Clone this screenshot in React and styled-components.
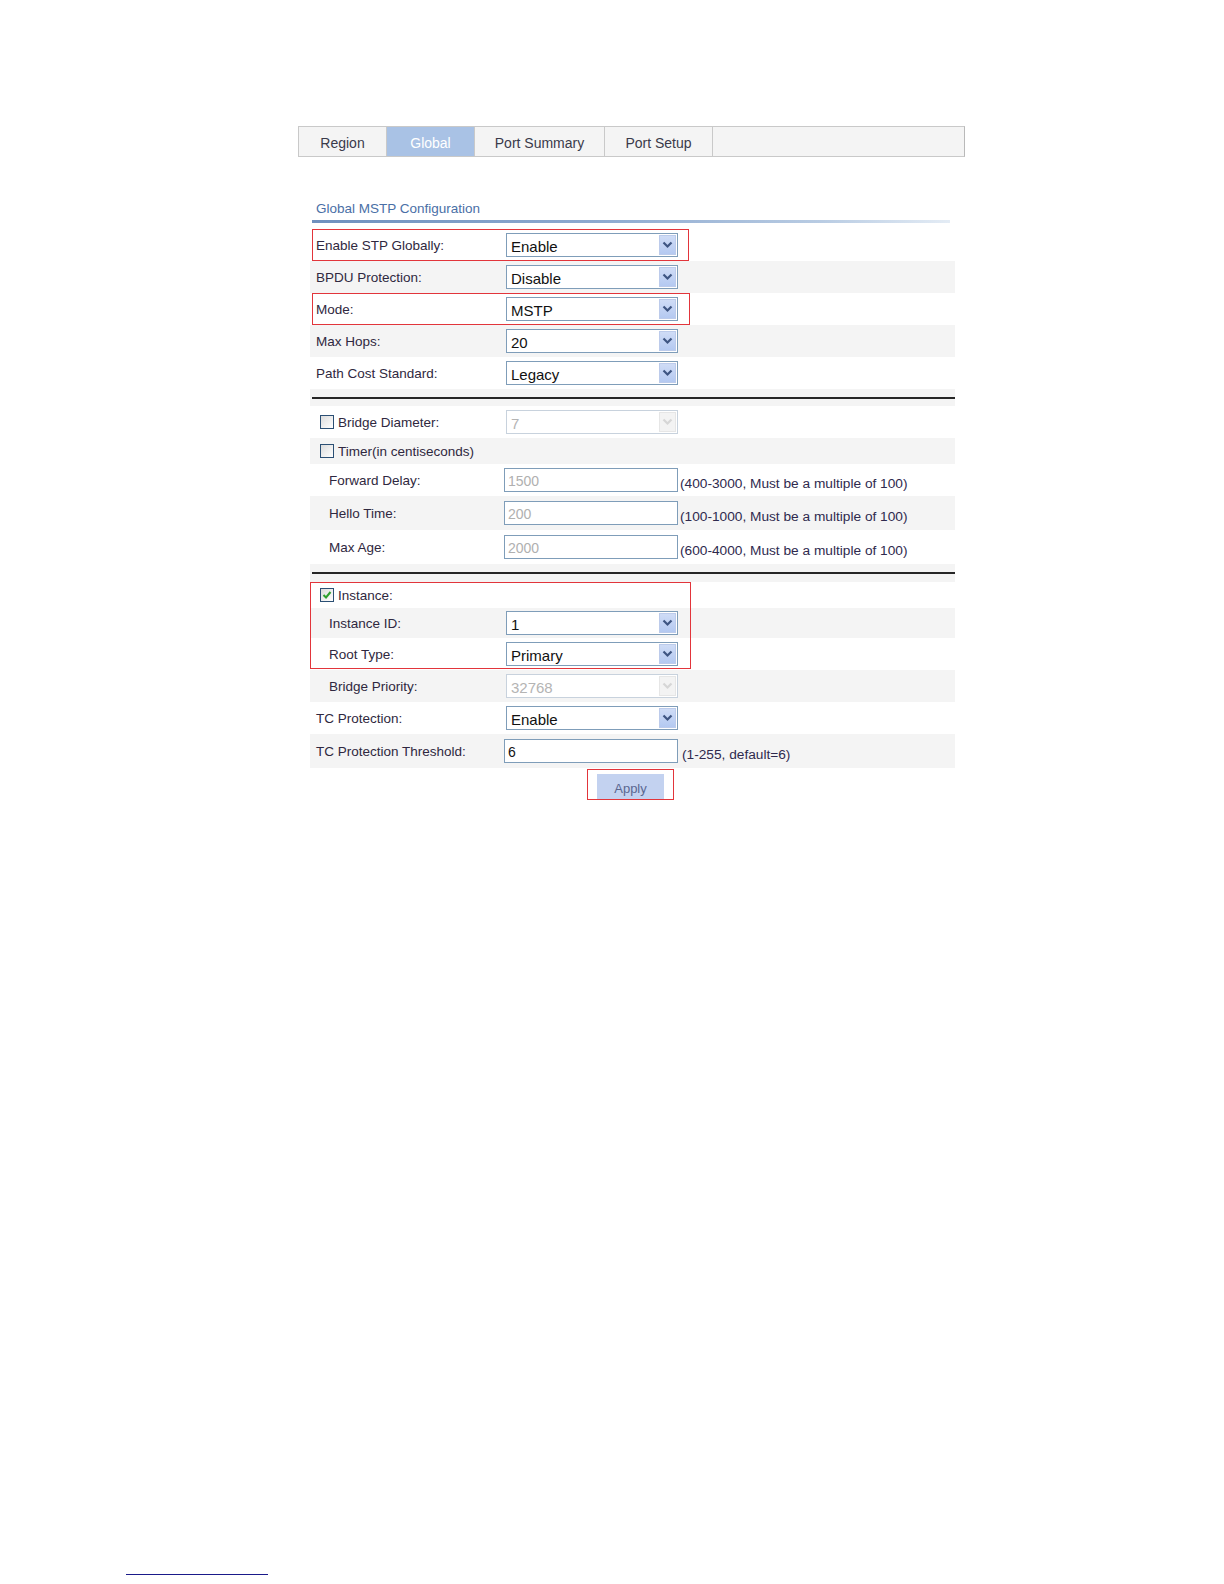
import React from 'react'
import styled, { createGlobalStyle } from 'styled-components'

const GlobalStyle = createGlobalStyle`
    html, body {
        margin: 0;
        padding: 0;
        background: #ffffff;
    }
    body {
        font-family: "Liberation Sans", Arial, sans-serif;
        color: #2f2840;
    }
`

const Page = styled.div`
    min-height: 1584px;
    display: flex;
    flex-direction: column;
`

const Content = styled.div`
    margin-left: 298px;
    margin-top: 126px;
    width: 667px;
`

const TabBar = styled.div`
    display: flex;
    height: 29px;
    border: 1px solid #c9c9c9;
    border-right-color: #b9b9b9;
    background: #f4f4f4;
`

const Tab = styled.div`
    width: ${({ w }) => w}px;
    display: flex;
    align-items: center;
    justify-content: center;
    padding-top: 3px;
    box-sizing: border-box;
    font-size: 14px;
    color: ${({ active }) => (active ? '#ffffff' : '#3a3a4a')};
    background: ${({ active }) => (active ? '#a9c2e5' : 'transparent')};
    border-right: 1px solid #c9c9c9;
`

const Panel = styled.div`
    margin-left: 12px;
    width: 645px;
`

const Title = styled.div`
    margin-top: 44px;
    padding-left: 6px;
    font-size: 13.5px;
    line-height: 16px;
    color: #4a6fa6;
`

const TitleRule = styled.div`
    margin: 3px 0 6px 2px;
    width: 638px;
    height: 3px;
    background: linear-gradient(to right, #6f90be, #8eaad0 45%, #b9cce3 80%, #e4ecf5);
`

const Highlight = styled.div`
    position: relative;

    &::after {
        content: '';
        position: absolute;
        left: ${({ left }) => left}px;
        top: 0;
        bottom: ${({ bottom }) => bottom || 0}px;
        width: ${({ w }) => w}px;
        border: 1px solid #e2353b;
        box-sizing: border-box;
        pointer-events: none;
    }
`

const Row = styled.div`
    display: grid;
    grid-template-columns: 196px 1fr;
    align-items: center;
    height: ${({ h }) => h || 32}px;
    background: ${({ shade }) => (shade ? '#f4f4f4' : '#ffffff')};
`

const Label = styled.div`
    padding-left: ${({ indent }) => (indent ? 19 : 6)}px;
    font-size: 13.5px;
    color: #2f2840;
    white-space: nowrap;
`

const CheckLabel = styled.label`
    display: flex;
    align-items: center;
    gap: 4px;
    padding-left: 10px;
    font-size: 13.5px;
    color: #2f2840;
    white-space: nowrap;
`

const Box = styled.span`
    width: 14px;
    height: 14px;
    box-sizing: border-box;
    border: 1px solid #2b4f74;
    background: linear-gradient(135deg, #dcdcdc, #ffffff);
    display: flex;
    align-items: center;
    justify-content: center;
`

const Field = styled.div`
    display: flex;
    align-items: center;
    gap: ${({ gap }) => gap || 2}px;
`

const SelectBox = styled.div`
    width: 172px;
    height: 24px;
    box-sizing: border-box;
    border: 1px solid ${({ disabled }) => (disabled ? '#c8d2dd' : '#7f9db9')};
    background: #ffffff;
    display: flex;
    align-items: center;
    justify-content: space-between;
`

const SelectValue = styled.span`
    padding-left: 4px;
    padding-top: 2px;
    font-size: 15px;
    color: ${({ disabled }) => (disabled ? '#b4b4b4' : '#111111')};
`

const SelectButton = styled.span`
    width: 17px;
    height: 20px;
    margin-right: 1px;
    box-sizing: border-box;
    display: flex;
    align-items: center;
    justify-content: center;
    border: 1px solid ${({ disabled }) => (disabled ? '#e6e6e6' : '#bccbeb')};
    background: ${({ disabled }) =>
        disabled ? '#f3f3f3' : 'linear-gradient(#cfdcf6, #b4c9f1)'};
`

const TextBox = styled.div`
    margin-left: -2px;
    width: 174px;
    height: 24px;
    box-sizing: border-box;
    border: 1px solid #7f9db9;
    background: #ffffff;
    display: flex;
    align-items: center;
    padding-left: 3px;
    padding-top: 2px;
    font-size: 14px;
    color: ${({ disabled }) => (disabled ? '#b0b0b0' : '#111111')};
`

const Hint = styled.span`
    font-size: 13.7px;
    padding-top: 6px;
    color: #2f2a4e;
    white-space: nowrap;
`

const Separator = styled.div`
    height: ${({ h }) => h}px;
    background: #f4f4f4;
    display: flex;
    align-items: flex-start;
    padding-top: ${({ top }) => top}px;
    box-sizing: border-box;
`

const SeparatorLine = styled.div`
    margin-left: 2px;
    width: 643px;
    height: 2px;
    background: #262626;
`

const ApplyArea = styled.div`
    height: 33px;
    display: flex;
    align-items: flex-start;
    padding-top: 1px;
    padding-left: 277px;
    box-sizing: border-box;
`

const ApplyFrame = styled.div`
    border: 1px solid #e2353b;
    padding: 4px 9px 0;
    display: flex;
`

const ApplyButton = styled.button`
    width: 67px;
    height: 25px;
    border: none;
    background: #c3d2f0;
    color: #5a6790;
    font-family: "Liberation Sans", Arial, sans-serif;
    font-size: 13px;
    padding-top: 5px;
`

const FootnoteRule = styled.div`
    margin-top: auto;
    margin-bottom: 9px;
    margin-left: 126px;
    width: 142px;
    height: 1px;
    background: #1a1a8a;
`

const Chevron = ({ disabled }) => (
    <svg width="11" height="8" viewBox="0 0 11 8">
        <path
            d="M1.5 1.5 L5.5 5.5 L9.5 1.5"
            fill="none"
            stroke={disabled ? '#d6d6d6' : '#3e5582'}
            strokeWidth="2.2"
        />
    </svg>
)

const Select = ({ value, disabled }) => (
    <SelectBox disabled={disabled}>
        <SelectValue disabled={disabled}>{value}</SelectValue>
        <SelectButton disabled={disabled}>
            <Chevron disabled={disabled} />
        </SelectButton>
    </SelectBox>
)

const Checkbox = ({ checked, children }) => (
    <CheckLabel>
        <Box>
            {checked && (
                <svg width="10" height="10" viewBox="0 0 10 10">
                    <path d="M1.5 5 L4 7.5 L8.5 2" fill="none" stroke="#2ea02e" strokeWidth="2" />
                </svg>
            )}
        </Box>
        {children}
    </CheckLabel>
)

const tabs = [
    { name: 'Region', w: 88 },
    { name: 'Global', w: 88, active: true },
    { name: 'Port Summary', w: 130 },
    { name: 'Port Setup', w: 108 },
]

const timers = [
    { label: 'Forward Delay:', value: '1500', hint: '(400-3000, Must be a multiple of 100)', h: 32 },
    { label: 'Hello Time:', value: '200', hint: '(100-1000, Must be a multiple of 100)', h: 34, shade: true },
    { label: 'Max Age:', value: '2000', hint: '(600-4000, Must be a multiple of 100)', h: 34 },
]

const App = () => {
    return (
        <Page>
            <GlobalStyle />
            <Content>
                <TabBar>
                    {tabs.map((tab) => (
                        <Tab key={tab.name} w={tab.w} active={tab.active}>
                            {tab.name}
                        </Tab>
                    ))}
                </TabBar>

                <Panel>
                    <Title>Global MSTP Configuration</Title>
                    <TitleRule />

                    <Highlight left={2} w={377}>
                        <Row>
                            <Label>Enable STP Globally:</Label>
                            <Select value="Enable" />
                        </Row>
                    </Highlight>
                    <Row shade>
                        <Label>BPDU Protection:</Label>
                        <Select value="Disable" />
                    </Row>
                    <Highlight left={2} w={378}>
                        <Row>
                            <Label>Mode:</Label>
                            <Select value="MSTP" />
                        </Row>
                    </Highlight>
                    <Row shade>
                        <Label>Max Hops:</Label>
                        <Select value="20" />
                    </Row>
                    <Row>
                        <Label>Path Cost Standard:</Label>
                        <Select value="Legacy" />
                    </Row>

                    <Separator h={17} top={8}>
                        <SeparatorLine />
                    </Separator>

                    <Row>
                        <Checkbox>Bridge Diameter:</Checkbox>
                        <Select value="7" disabled />
                    </Row>
                    <Row h={26} shade>
                        <Checkbox>Timer(in centiseconds)</Checkbox>
                    </Row>
                    {timers.map((t) => (
                        <Row key={t.label} h={t.h} shade={t.shade}>
                            <Label indent>{t.label}</Label>
                            <Field>
                                <TextBox disabled>{t.value}</TextBox>
                                <Hint>{t.hint}</Hint>
                            </Field>
                        </Row>
                    ))}

                    <Separator h={18} top={8}>
                        <SeparatorLine />
                    </Separator>

                    <Highlight left={0} w={381} bottom={1}>
                        <Row h={26}>
                            <Checkbox checked>Instance:</Checkbox>
                        </Row>
                        <Row h={30} shade>
                            <Label indent>Instance ID:</Label>
                            <Select value="1" />
                        </Row>
                        <Row>
                            <Label indent>Root Type:</Label>
                            <Select value="Primary" />
                        </Row>
                    </Highlight>
                    <Row shade>
                        <Label indent>Bridge Priority:</Label>
                        <Select value="32768" disabled />
                    </Row>
                    <Row>
                        <Label>TC Protection:</Label>
                        <Select value="Enable" />
                    </Row>
                    <Row h={34} shade>
                        <Label>TC Protection Threshold:</Label>
                        <Field gap={4}>
                            <TextBox>6</TextBox>
                            <Hint>(1-255, default=6)</Hint>
                        </Field>
                    </Row>

                    <ApplyArea>
                        <ApplyFrame>
                            <ApplyButton>Apply</ApplyButton>
                        </ApplyFrame>
                    </ApplyArea>
                </Panel>
            </Content>
            <FootnoteRule />
        </Page>
    )
}

export default App
